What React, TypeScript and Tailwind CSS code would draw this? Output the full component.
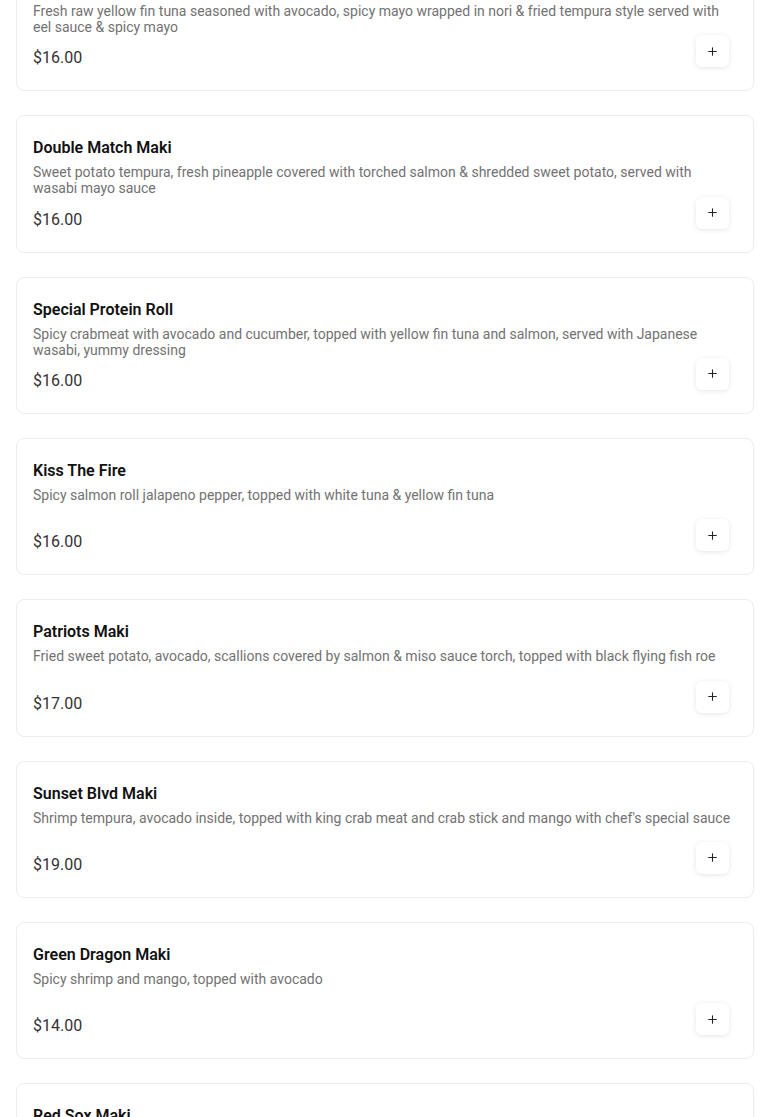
import { Plus } from "lucide-react";

type Item = {
  name: string;
  description: string;
  price: string;
};

const items: Item[] = [
  {
    name: "Crunchy Tuna Maki",
    description:
      "Fresh raw yellow fin tuna seasoned with avocado, spicy mayo wrapped in nori & fried tempura style served with eel sauce & spicy mayo",
    price: "$16.00",
  },
  {
    name: "Double Match Maki",
    description:
      "Sweet potato tempura, fresh pineapple covered with torched salmon & shredded sweet potato, served with wasabi mayo sauce",
    price: "$16.00",
  },
  {
    name: "Special Protein Roll",
    description:
      "Spicy crabmeat with avocado and cucumber, topped with yellow fin tuna and salmon, served with Japanese wasabi, yummy dressing",
    price: "$16.00",
  },
  {
    name: "Kiss The Fire",
    description: "Spicy salmon roll jalapeno pepper, topped with white tuna & yellow fin tuna",
    price: "$16.00",
  },
  {
    name: "Patriots Maki",
    description:
      "Fried sweet potato, avocado, scallions covered by salmon & miso sauce torch, topped with black flying fish roe",
    price: "$17.00",
  },
  {
    name: "Sunset Blvd Maki",
    description:
      "Shrimp tempura, avocado inside, topped with king crab meat and crab stick and mango with chef's special sauce",
    price: "$19.00",
  },
  {
    name: "Green Dragon Maki",
    description: "Spicy shrimp and mango, topped with avocado",
    price: "$14.00",
  },
  {
    name: "Red Sox Maki",
    description: "Spicy tuna and cucumber, topped with salmon, tuna and red tobiko",
    price: "$16.00",
  },
];

function MenuCard({ item }: { item: Item }) {
  return (
    <div className="relative rounded-lg border border-[#ececec] bg-white px-4 py-5">
      <h3 className="text-base leading-6 font-semibold text-[#111]">{item.name}</h3>
      <p className="mt-1 min-h-[32px] text-sm leading-4 text-[#727272]">
        {item.description}
      </p>
      <div className="mt-[11.33px] text-base leading-6 text-[#333]">{item.price}</div>
      <button
        aria-label={`Add ${item.name}`}
        className="absolute right-[24px] bottom-[23px] flex h-8 w-[33px] items-center justify-center rounded-md bg-white shadow-[0_1px_5px_rgba(0,0,0,0.10)]"
      >
        <Plus size={13} strokeWidth={2} className="text-[#222]" />
      </button>
    </div>
  );
}

export default function App() {
  return (
    <div
      className="min-h-screen overflow-hidden bg-white"
      style={{ fontFamily: "Roboto, 'Liberation Sans', sans-serif" }}
    >
      <div className="-mt-[46px] flex flex-col gap-6 px-4">
        {items.map((item) => (
          <MenuCard key={item.name} item={item} />
        ))}
      </div>
    </div>
  );
}
